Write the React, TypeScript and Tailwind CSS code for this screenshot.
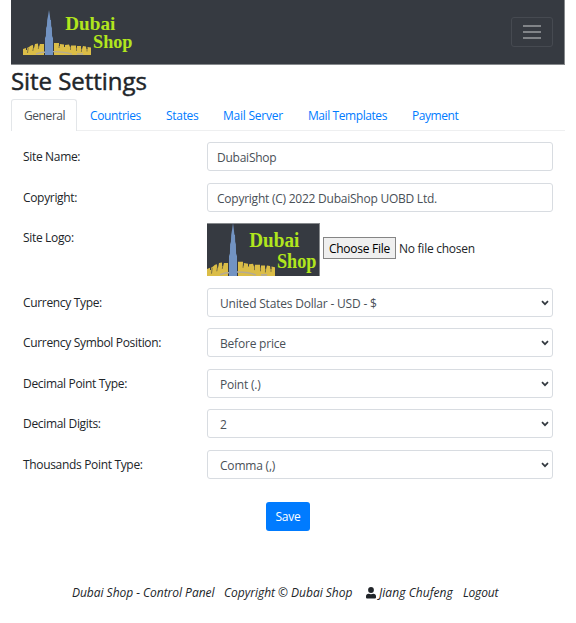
import type { ReactNode } from "react";

const skyline =
  "M0 39 L3 38 V40 L4 40 V38 L6 37 L8 35.5 L10 35 V38 L11 38 L12 34 L15 33.5 V36.5 L16 36.5 L17 34 L21 34 V45 H31 V33 L36 33 V36 L37 36 V34 L41 34.5 V37 L42 37 V35 L46 34.5 L47 37 L48 37 V35.5 L53 35.5 V38 L54 38 V36 L58 36 V39 L59 39 L60 36 L63 36.5 L63.5 39 L64.5 39 V37 L68 37.5 V45 H0 Z";

const slits = "M5.2 38 L4.5 43 M10.8 36 L9.8 41 M16 35 L15.3 39 M36.5 34 L36 38 M47.5 36 L47.5 40 M53.5 37 L53.5 41 M58.7 38 L58.4 42 M64 38 L64 41.5";

function Logo({ className }: { className: string }) {
  return (
    <svg viewBox="0 0 113 45" preserveAspectRatio="none" className={className}>
      <path d={skyline} fill="#dbbd47" />
      <path d={slits} stroke="#5c5740" strokeWidth="0.7" fill="none" />
      <path d="M13 44 Q18 42 24 42 M30 41.6 Q42 41.5 49 44.3 M54 44 H60" stroke="#b5ab94" strokeWidth="1.4" fill="none" />
      <path d="M26 0 L26.8 5 L27.4 10 L28 10 L28.2 16 L28.9 18 L29.1 26 L30 28 L30 45 L22 45 L22 28 L22.9 26 L23.1 18 L23.9 16 L24.2 10 L25.2 5 Z" fill="#7293c2" />
      <g fill="#b2e61d" fontFamily="'Liberation Serif', serif" fontWeight="700" fontSize="18">
        <text x="42.3" y="20" textLength="50" lengthAdjust="spacingAndGlyphs">Dubai</text>
        <text x="70" y="38" textLength="39.5" lengthAdjust="spacingAndGlyphs">Shop</text>
      </g>
    </svg>
  );
}

function Row({ label, children }: { label: string; children: ReactNode }) {
  return (
    <div className="flex pl-3 pr-3">
      <div className="w-[184px] shrink-0 pt-[6px] leading-[18px] tracking-[-0.33px]">{label}</div>
      <div className="min-w-0 flex-1">{children}</div>
    </div>
  );
}

function TextBox({ value }: { value: string }) {
  return (
    <div className="h-[29px] rounded-[3px] border border-[#d8dce1] pl-[9px] pt-[6px] leading-[18px] tracking-[-0.24px] text-[#495057]">
      {value}
    </div>
  );
}

function SelectBox({ value }: { value: string }) {
  return (
    <div className="flex h-[29px] justify-between rounded-[3px] border border-[#d8dce1] pl-3 pr-[3px] pt-[6px] leading-[18px] tracking-[-0.2px] text-[#495057]">
      <span>{value}</span>
      <svg viewBox="0 0 8 6" className="mt-[5px] h-[6px] w-2">
        <path d="M1 1.2 L4 4.2 L7 1.2" fill="none" stroke="#343a40" strokeWidth="1.7" />
      </svg>
    </div>
  );
}

export default function App() {
  return (
    <div className="h-[623px] w-[576px] bg-white pl-[11px] pr-[11px] font-['Open_Sans','Noto_Sans',sans-serif] text-[12px] text-[#212529]">
      <nav className="flex h-[65px] items-start justify-between border-b border-r border-[#86898c] bg-[#363a41] pl-3 pr-[11px] pt-[10px]">
        <Logo className="h-[45px] w-[113px]" />
        <div className="mt-[7px] flex h-[30px] w-[42px] items-center justify-center rounded-[3px] border border-[#464a51]">
          <svg viewBox="0 0 18 16" className="h-4 w-[18px]">
            <path d="M0 2 H18 M0 8 H18 M0 14 H18" stroke="#9b9da0" strokeWidth="1.5" />
          </svg>
        </div>
      </nav>
      <h1 className="h-[34px] pt-[1px] text-[24px] font-medium leading-[30px] tracking-[-0.05px] [-webkit-text-stroke:0.45px_#212529]">Site Settings</h1>
      <div className="flex h-8 border-b border-[#eeeff0] leading-[18px] text-[#007bff]">
        <div className="h-8 w-[66px] rounded-t-[3px] border border-b-0 border-[#e3e6e9] bg-white pl-3 pt-[7px] tracking-[-0.42px] text-[#495057]">General</div>
        <div className="w-[76px] pl-[13px] pt-2 tracking-[-0.36px]">Countries</div>
        <div className="w-[57px] pl-[13px] pt-2 tracking-[-0.3px]">States</div>
        <div className="w-[85px] pl-[13px] pt-2 tracking-[-0.24px]">Mail Server</div>
        <div className="w-[104px] pl-[13px] pt-2 tracking-[-0.42px]">Mail Templates</div>
        <div className="pl-[13px] pt-2 tracking-[-0.45px]">Payment</div>
      </div>
      <div className="flex flex-col gap-[11.5px] pt-[11px]">
        <Row label="Site Name:"><TextBox value="DubaiShop" /></Row>
        <Row label="Copyright:"><TextBox value="Copyright (C) 2022 DubaiShop UOBD Ltd." /></Row>
        <Row label="Site Logo:">
          <div className="flex h-[53px]">
            <div className="w-[113px] border-r border-t border-[#86898c] bg-[#363a41]">
              <Logo className="-mt-px h-[53px] w-[113px]" />
            </div>
            <div className="ml-[3px] mt-[14px] h-[22px] w-[73px] whitespace-nowrap border border-[#858585] bg-[#efefef] pl-[5px] pt-[2px] leading-[18px] tracking-[-0.28px] text-black">Choose File</div>
            <div className="ml-[3px] mt-[17px] leading-[18px] tracking-[-0.26px]">No file chosen</div>
          </div>
        </Row>
        <Row label="Currency Type:"><SelectBox value="United States Dollar - USD - $" /></Row>
        <Row label="Currency Symbol Position:"><SelectBox value="Before price" /></Row>
        <Row label="Decimal Point Type:"><SelectBox value="Point (.)" /></Row>
        <Row label="Decimal Digits:"><SelectBox value="2" /></Row>
        <Row label="Thousands Point Type:"><SelectBox value="Comma (,)" /></Row>
      </div>
      <div className="mt-[23px] flex pl-[255px]">
        <button className="h-[29px] w-11 rounded-[3px] bg-[#007bff] pt-[2px] tracking-[-0.2px] text-white">Save</button>
      </div>
      <footer className="mt-[53px] flex pl-[61px] italic leading-[18px]">
        <span className="w-[152px] tracking-[-0.03px]">Dubai Shop - Control Panel</span>
        <span className="w-[142px] tracking-[-0.02px]">Copyright © Dubai Shop</span>
        <svg viewBox="0 0 10 12" className="mt-[3px] h-3 w-[10px]" fill="#212529">
          <circle cx="5" cy="3" r="2.9" />
          <path d="M0 10.5 V9.3 Q0 6.7 2.7 6.7 Q5 7.6 7.3 6.7 Q10 6.7 10 9.3 V10.5 Q10 11.5 9 11.5 H1 Q0 11.5 0 10.5Z" />
        </svg>
        <span className="ml-[3px] w-[84px] tracking-[0.06px]">Jiang Chufeng</span>
        <span className="tracking-[-0.2px]">Logout</span>
      </footer>
    </div>
  );
}
